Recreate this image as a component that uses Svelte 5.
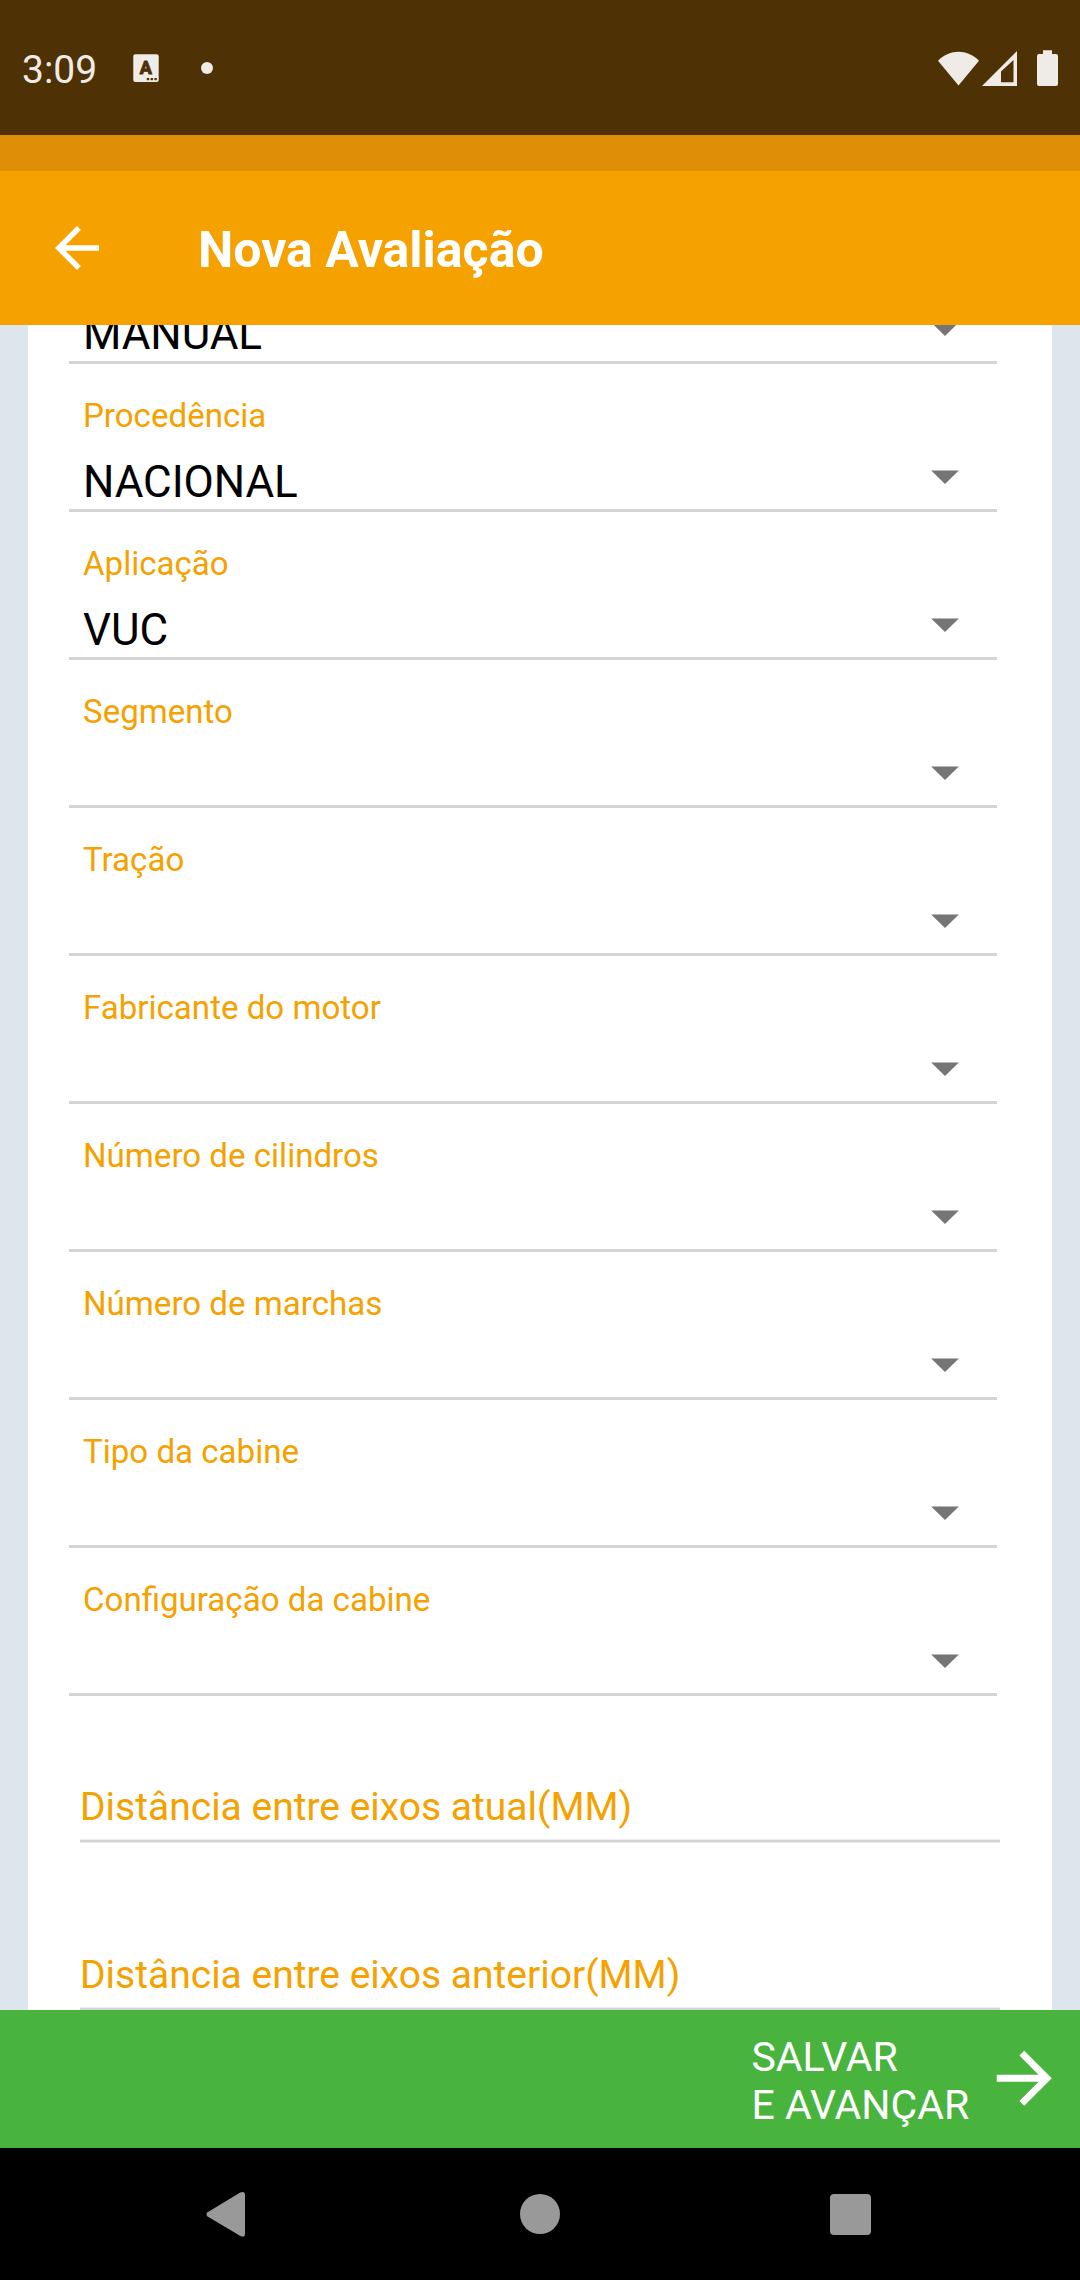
<script>
  const selects = [
    { label: '', value: 'MANUAL' },
    { label: 'Procedência', value: 'NACIONAL' },
    { label: 'Aplicação', value: 'VUC' },
    { label: 'Segmento', value: '' },
    { label: 'Tração', value: '' },
    { label: 'Fabricante do motor', value: '' },
    { label: 'Número de cilindros', value: '' },
    { label: 'Número de marchas', value: '' },
    { label: 'Tipo da cabine', value: '' },
    { label: 'Configuração da cabine', value: '' },
  ];
  const inputs = ['Distância entre eixos atual(MM)', 'Distância entre eixos anterior(MM)'];
</script>

<div class="screen">
  <div class="status">
    <span class="time">3:09</span>
    <svg class="app-icon" width="26" height="28" viewBox="0 0 26 28">
      <rect x="0.3" y="0.2" width="25.4" height="27.8" rx="2" fill="#efebe6" />
      <text class="app-letter" x="12.7" y="20.2" text-anchor="middle">A</text>
      <g fill="#4e3104">
        <rect x="13.8" y="24" width="2.4" height="2.2" />
        <rect x="17.6" y="24" width="2.4" height="2.2" />
        <rect x="21.4" y="24" width="2.4" height="2.2" />
      </g>
    </svg>
    <span class="dot"></span>
    <svg class="radios" width="122" height="38" viewBox="937 48 122 38" fill="#efebe6">
      <path d="M938 59.7 C950 47.8 967 47.8 979 59.7 L958.5 84.5 Z" />
      <path fill-rule="evenodd" d="M982 85 L1017 50 V85 Z M1001 70.5 V81.3 H1013.5 V59 Z" />
      <path d="M1043 49.3 h9 v3.7 h4 q2 0 2 2 v28 q0 2 -2 2 h-17 q-2 0 -2 -2 v-28 q0 -2 2 -2 h4 z" />
    </svg>
  </div>
  <div class="strip"></div>
  <header>
    <svg width="66" height="66" viewBox="0 0 24 24" fill="#fff">
      <path d="M20 11H7.83l5.59-5.59L12 4l-8 8 8 8 1.41-1.41L7.83 13H20v-2z" />
    </svg>
    <h1>Nova Avaliação</h1>
  </header>

  <main>
    <div class="card">
      {#each selects as s}
        <div class="select">
          <div class="label">{s.label}</div>
          <div class="row">
            <span class="value">{s.value}</span>
            <svg width="28" height="14" viewBox="0 0 28 14"><path d="M0.2 0.4H27.8L14 14z" fill="#757575" /></svg>
          </div>
        </div>
      {/each}
      <div class="inputs">
        {#each inputs as text}
          <div class="input"><span>{text}</span></div>
        {/each}
      </div>
    </div>
  </main>

  <div class="save">
    <span class="save-text">SALVAR<br />E AVANÇAR</span>
    <svg width="82.5" height="82.5" viewBox="0 0 24 24" fill="#fff">
      <path d="M12 4l-1.41 1.41L16.17 11H4v2h12.17l-5.58 5.59L12 20l8-8z" />
    </svg>
  </div>

  <nav>
    <svg width="1080" height="132" viewBox="0 2148 1080 132" fill="#999">
      <path d="M207.6 2212.2 L240.2 2192.5 Q245 2190.6 245 2195 V2234 Q245 2238.2 240.4 2236 L207.6 2216.6 Q205.4 2214.4 207.6 2212.2 Z" />
      <circle cx="540" cy="2214" r="20" />
      <rect x="830" y="2194" width="41" height="41" rx="4" />
    </svg>
  </nav>
</div>

<style>
  :global(body) {
    margin: 0;
    background: #000;
  }
  .screen {
    width: 1080px;
    height: 2280px;
    display: flex;
    flex-direction: column;
    overflow: hidden;
    font-family: Roboto, sans-serif;
  }
  svg {
    display: block;
    flex: none;
  }
  .status {
    height: 135px;
    flex: none;
    box-sizing: border-box;
    padding: 0 21px 0 22px;
    display: flex;
    align-items: center;
    background: #4e3104;
    color: #efebe6;
  }
  .time {
    width: 111px;
    font-size: 39px;
    line-height: 48px;
    padding-top: 4px;
  }
  .app-letter {
    font: 700 18px Roboto, sans-serif;
    fill: #4e3104;
    stroke: #4e3104;
    stroke-width: 1;
    stroke-linejoin: round;
  }
  .dot {
    width: 12px;
    height: 12px;
    margin-left: 42px;
    border-radius: 50%;
    background: #efebe6;
  }
  .radios {
    margin-left: auto;
  }
  .strip {
    height: 36px;
    flex: none;
    background: #df8f07;
  }
  header {
    height: 154px;
    flex: none;
    box-sizing: border-box;
    padding-left: 44px;
    display: flex;
    align-items: center;
    gap: 88px;
    background: #f5a100;
  }
  h1 {
    margin: 0;
    padding-top: 4px;
    font-size: 50px;
    line-height: 60px;
    font-weight: 700;
    color: #fff;
  }
  main {
    height: 1685px;
    flex: none;
    box-sizing: border-box;
    padding: 0 28px;
    overflow: hidden;
    background: #dee6ed;
  }
  .card {
    margin-top: -109px;
    height: 1794px;
    box-sizing: border-box;
    padding: 0 55px 0 41px;
    background: #fff;
  }
  .select {
    height: 148px;
    box-sizing: border-box;
    padding: 32px 38px 0 14px;
    border-bottom: 3px solid #d4d4d4;
  }
  .label {
    height: 40px;
    font-size: 33.1px;
    line-height: 40px;
    color: #f5a100;
  }
  .row {
    height: 52px;
    margin-top: 20px;
    display: flex;
    align-items: center;
    justify-content: space-between;
  }
  .row svg {
    margin-bottom: 11px;
  }
  .value {
    font-size: 44px;
    line-height: 52px;
    letter-spacing: -0.08px;
    color: #000;
  }
  .inputs {
    padding: 0 0 0 11px;
    margin-right: -3px;
  }
  .input {
    height: 168px;
    box-sizing: border-box;
    display: flex;
    align-items: flex-end;
    padding-bottom: 9px;
    border-bottom: 2px solid #d4d4d4;
    box-shadow: 0 1px #ededed, inset 0 -1px #ededed;
    font-size: 39px;
    line-height: 48px;
    color: #f5a100;
  }
  .inputs .input:first-child {
    height: 146px;
  }
  .save {
    height: 138px;
    flex: none;
    display: flex;
    align-items: center;
    justify-content: flex-end;
    padding-right: 15px;
    background: #48b43e;
    color: #fff;
  }
  .save svg {
    margin-bottom: 1px;
  }
  .save-text {
    width: 231px;
    font-size: 41px;
    line-height: 48px;
    padding-top: 3px;
    white-space: nowrap;
  }
  nav {
    height: 132px;
    flex: none;
    background: #000;
  }
</style>
